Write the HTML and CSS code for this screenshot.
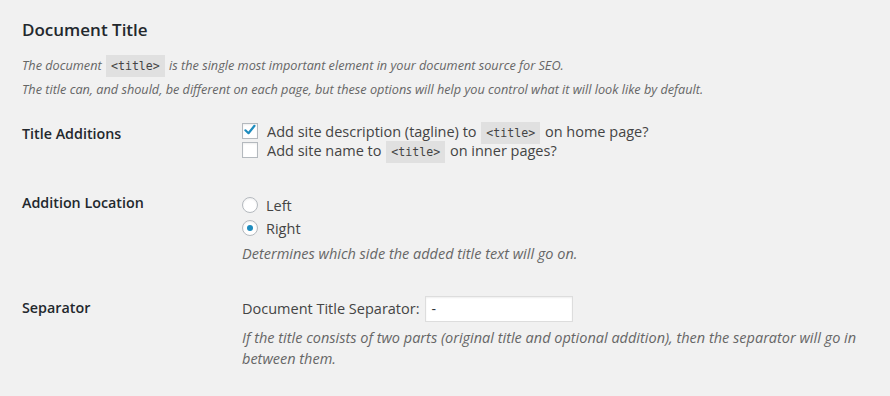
FILE: index.html
```html
<!DOCTYPE html>
<html>
<head>
<meta charset="utf-8">
<link rel="stylesheet" href="styles.css">
</head>
<body>
<div class="wrap">
  <h2 class="title">Document Title</h2>
  <p class="intro">The document <code>&lt;title&gt;</code> is the single most important element in your document source for SEO.</p>
  <p class="intro">The title can, and should, be different on each page, but these options will help you control what it will look like by default.</p>

  <div class="form-table">
    <div class="row">
      <div class="th">Title Additions</div>
      <div class="td td-checks">
        <label class="opt"><span class="checkbox"><svg viewBox="0 0 16 16" width="16" height="16"><path d="M3.4 8.3 L6.5 11.2 L12.5 3.8" fill="none" stroke="#1e8cbe" stroke-width="2.2" stroke-linecap="round" stroke-linejoin="round"/></svg></span>Add site description (tagline) to <code>&lt;title&gt;</code> on home page?</label>
        <label class="opt"><span class="checkbox"></span>Add site name to <code>&lt;title&gt;</code> on inner pages?</label>
      </div>
    </div>
    <div class="row">
      <div class="th th-radio">Addition Location</div>
      <div class="td">
        <div class="radios">
          <label class="opt"><span class="radio"></span>Left</label>
          <label class="opt"><span class="radio on"></span>Right</label>
        </div>
        <p class="description">Determines which side the added title text will go on.</p>
      </div>
    </div>
    <div class="row">
      <div class="th">Separator</div>
      <div class="td">
        <label class="sep">Document Title Separator: <span class="input">-</span></label>
        <p class="description desc-sep">If the title consists of two parts (original title and optional addition), then the separator will go in between them.</p>
      </div>
    </div>
  </div>
</div>
</body>
</html>
```
FILE: styles.css
```css
html, body {
  margin: 0;
  padding: 0;
  background: #f1f1f1;
}
body {
  font-family: "Open Sans", sans-serif;
  font-size: 13px;
  color: #444;
}
.wrap {
  padding: 0 20px 0 22px;
}
.title {
  margin: 0;
  padding-top: 19px;
  font-size: 17px;
  font-weight: 600;
  color: #23282d;
  line-height: 22px;
  margin-bottom: 12px;
}
.intro {
  margin: 0;
  font-size: 12.7px;
  font-style: italic;
  color: #666;
  line-height: 24px;
}
code {
  font-family: "DejaVu Sans Mono", monospace;
  font-style: normal;
  font-size: 11.6px;
  line-height: 1;
  background: rgba(0,0,0,0.07);
  padding: 4px 5px 4px;
  margin: 0 1px;
  color: #444;
}
.form-table {
  margin-top: 4px;
}
.row {
  display: flex;
}
.th {
  width: 200px;
  flex: none;
  padding: 20px 10px 20px 0;
  font-size: 14.3px;
  font-weight: 600;
  color: #23282d;
  line-height: 18px;
}
.td {
  flex: 1;
  padding: 15px 10px;
  font-size: 14.5px;
  line-height: 19px;
}
.td-checks {
  padding-top: 16.5px;
  padding-bottom: 14.5px;
}
.opt {
  display: block;
  line-height: 19px;
  white-space: nowrap;
}
.checkbox {
  display: inline-block;
  vertical-align: middle;
  width: 14px;
  height: 14px;
  border: 1px solid #b4b9be;
  background: #fff;
  box-shadow: inset 0 1px 2px rgba(0,0,0,0.07);
  margin: -3px 9px 0 0;
  position: relative;
}
.checkbox svg {
  position: absolute;
  left: -1px;
  top: -2px;
}
.radios {
  padding-top: 4.5px;
}
.radios .opt {
  line-height: 23px;
}
.radio {
  display: inline-block;
  vertical-align: middle;
  width: 14px;
  height: 14px;
  border: 1px solid #b4b9be;
  border-radius: 50%;
  background: #fff;
  box-shadow: inset 0 1px 2px rgba(0,0,0,0.07);
  margin: -3px 8px 0 0;
  position: relative;
}
.radio.on::after {
  content: "";
  position: absolute;
  width: 6px;
  height: 6px;
  border-radius: 50%;
  background: #1e8cbe;
  left: 4px;
  top: 4px;
}
.description {
  margin: 3px 0 0;
  font-size: 14.5px;
  font-style: italic;
  color: #666;
  line-height: 21px;
}
.desc-sep {
  margin-top: 5.5px;
}
.sep {
  display: flex;
  align-items: center;
  padding-top: 2px;
  color: #444;
}
.input {
  display: inline-block;
  box-sizing: border-box;
  width: 148px;
  height: 26px;
  border: 1px solid #ddd;
  background: #fff;
  box-shadow: inset 0 1px 2px rgba(0,0,0,0.07);
  margin-left: 5px;
  padding: 0 6px;
  line-height: 24px;
  font-size: 14px;
  color: #32373c;
}
```
